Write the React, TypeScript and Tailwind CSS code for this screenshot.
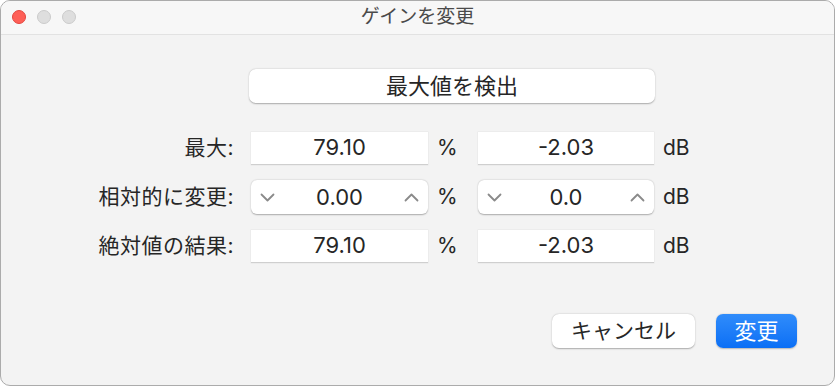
import { ReactNode } from "react";

const jp = "font-['Inter','Noto_Sans_CJK_JP',sans-serif]";

function Chevron({ up }: { up?: boolean }) {
  return (
    <svg width="15" height="9" viewBox="0 0 15 9" fill="none">
      <path
        d={up ? "M1.5 7.5L7.5 1.5L13.5 7.5" : "M1.5 1.5L7.5 7.5L13.5 1.5"}
        stroke="#8a8a8a"
        strokeWidth="1.8"
        strokeLinecap="round"
        strokeLinejoin="round"
      />
    </svg>
  );
}

function Field({ value, w }: { value: string; w: string }) {
  return (
    <div
      className={`${w} h-[33px] bg-white border-b border-[#cfcfcf] shadow-[0_0_0_0.5px_rgba(0,0,0,0.06)] flex items-center justify-center text-[22px] text-[#262626]`}
    >
      {value}
    </div>
  );
}

function Stepper({ value, w }: { value: string; w: string }) {
  return (
    <div
      className={`${w} h-[34px] bg-white rounded-[6px] shadow-[0_0.5px_1.5px_rgba(0,0,0,0.3)] flex items-center justify-between px-[9px] text-[22px] text-[#262626]`}
    >
      <Chevron />
      <span>{value}</span>
      <Chevron up />
    </div>
  );
}

function Row({ label, children }: { label: string; children: ReactNode }) {
  return (
    <div className="flex items-center h-[34px]">
      <div className="w-[233px] text-right text-[21px] tracking-[0.5px] text-[#262626]">{label}</div>
      <div className="ml-[17px] flex items-center">{children}</div>
    </div>
  );
}

function Unit({ children, w }: { children: ReactNode; w: string }) {
  return <div className={`${w} pl-[9px] text-[21px] text-[#262626]`}>{children}</div>;
}

export default function App() {
  return (
    <div className={`w-[835px] h-[386px] bg-white ${jp}`}>
      <div className="w-[835px] h-[386px] rounded-[10px] border border-[#ababab] bg-[#f3f3f3] overflow-hidden flex flex-col">
        {/* Title bar */}
        <div className="relative h-[34px] bg-[#f7f7f7] border-b border-[#e2e2e2] flex items-center justify-center shrink-0">
          <div className="absolute left-[11px] top-[9px] flex gap-[11px]">
            <div className="w-[14px] h-[14px] rounded-full bg-[#fe5f57] border border-[#e2463f]" />
            <div className="w-[14px] h-[14px] rounded-full bg-[#dedede] border border-[#cacaca]" />
            <div className="w-[14px] h-[14px] rounded-full bg-[#dedede] border border-[#cacaca]" />
          </div>
          <span className="text-[19px] text-[#4a4a4a]">ゲインを変更</span>
        </div>

        {/* Body */}
        <div className="flex flex-col">
          <button className="mt-[34px] ml-[248px] w-[406px] h-[34px] bg-white rounded-[7px] shadow-[0_0.5px_1.5px_rgba(0,0,0,0.3)] text-[22px] text-[#262626]">
            最大値を検出
          </button>

          <div className="mt-[28px] flex flex-col gap-[15px]">
            <Row label="最大:">
              <Field value="79.10" w="w-[177px]" />
              <Unit w="w-[50px]">%</Unit>
              <Field value="-2.03" w="w-[176px]" />
              <Unit w="w-[40px]">dB</Unit>
            </Row>
            <Row label="相対的に変更:">
              <Stepper value="0.00" w="w-[177px]" />
              <Unit w="w-[50px]">%</Unit>
              <Stepper value="0.0" w="w-[176px]" />
              <Unit w="w-[40px]">dB</Unit>
            </Row>
            <Row label="絶対値の結果:">
              <Field value="79.10" w="w-[177px]" />
              <Unit w="w-[50px]">%</Unit>
              <Field value="-2.03" w="w-[176px]" />
              <Unit w="w-[40px]">dB</Unit>
            </Row>
          </div>

          <div className="mt-[51px] mr-[37px] flex justify-end gap-[21px]">
            <button className="w-[143px] h-[34px] bg-white rounded-[7px] shadow-[0_0.5px_1.5px_rgba(0,0,0,0.3)] text-[21px] text-[#262626]">
              キャンセル
            </button>
            <button className="w-[81px] h-[34px] rounded-[7px] bg-gradient-to-b from-[#2f8cfb] to-[#0a6ff5] shadow-[0_0.5px_1.5px_rgba(0,0,0,0.25)] text-[22px] text-white">
              変更
            </button>
          </div>
        </div>
      </div>
    </div>
  );
}
